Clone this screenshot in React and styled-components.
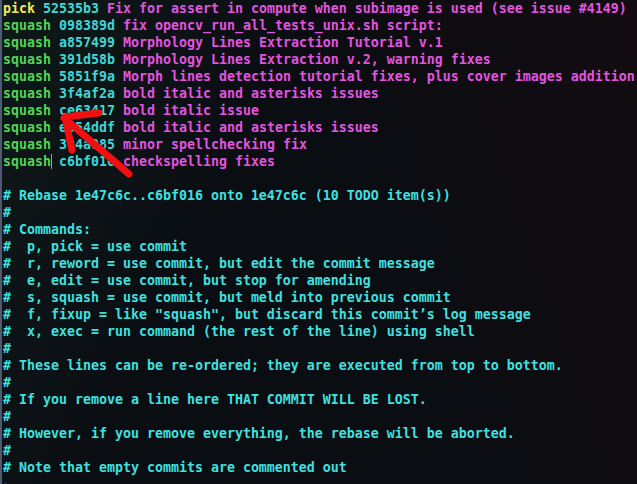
import React from "react";
import styled, { createGlobalStyle } from "styled-components";

const Global = createGlobalStyle`
  html, body {
    margin: 0;
    padding: 0;
    background: #0a0d12;
  }
  body {
    width: 637px;
    height: 484px;
    overflow: hidden;
  }
`;

const Screen = styled.div`
  position: relative;
  width: 637px;
  height: 484px;
  overflow: hidden;
  background:
    linear-gradient(115deg, rgba(20, 40, 34, 0.45) 0%, rgba(20, 40, 34, 0) 38%),
    linear-gradient(250deg, rgba(22, 12, 16, 0.7) 0%, rgba(10, 12, 18, 0) 45%),
    #0a0d12;
  border-left: 2px solid #4d5a70;
  box-sizing: border-box;
`;

const Buffer = styled.pre`
  margin: 0;
  padding: 0 0 0 1px;
  font-family: "DejaVu Sans Mono", "Liberation Mono", monospace;
  font-weight: bold;
  font-size: 13.29px;
  line-height: 17px;
  color: #3fe0e0;
`;

const Line = styled.div`
  height: 17px;
  white-space: pre;
`;

const Cmd = styled.span`
  color: ${(p) => (p.$pick ? "#ecec5a" : "#52d452")};
`;

const Hash = styled.span`
  color: #3fd6d6;
`;

const Msg = styled.span`
  color: #e055e0;
`;

const Cursor = styled.span`
  display: inline-block;
  width: 1px;
  height: 15px;
  margin-right: -1px;
  vertical-align: -3px;
  background: #52d452;
`;

const Tilde = styled.span`
  color: #4a5ed8;
`;

const Arrow = styled.svg`
  position: absolute;
  left: 0;
  top: 0;
  pointer-events: none;
`;

const commits = [
  ["pick", "52535b3", "Fix for assert in compute when subimage is used (see issue #4149)"],
  ["squash", "098389d", "fix opencv_run_all_tests_unix.sh script:"],
  ["squash", "a857499", "Morphology Lines Extraction Tutorial v.1"],
  ["squash", "391d58b", "Morphology Lines Extraction v.2, warning fixes"],
  ["squash", "5851f9a", "Morph lines detection tutorial fixes, plus cover images addition"],
  ["squash", "3f4af2a", "bold italic and asterisks issues"],
  ["squash", "ce63417", "bold italic issue"],
  ["squash", "e054ddf", "bold italic and asterisks issues"],
  ["squash", "394a085", "minor spellchecking fix"],
  ["squash", "c6bf016", "checkspelling fixes"],
];

const comments = [
  "",
  "# Rebase 1e47c6c..c6bf016 onto 1e47c6c (10 TODO item(s))",
  "#",
  "# Commands:",
  "#  p, pick = use commit",
  "#  r, reword = use commit, but edit the commit message",
  "#  e, edit = use commit, but stop for amending",
  "#  s, squash = use commit, but meld into previous commit",
  "#  f, fixup = like \"squash\", but discard this commit\u2019s log message",
  "#  x, exec = run command (the rest of the line) using shell",
  "#",
  "# These lines can be re-ordered; they are executed from top to bottom.",
  "#",
  "# If you remove a line here THAT COMMIT WILL BE LOST.",
  "#",
  "# However, if you remove everything, the rebase will be aborted.",
  "#",
  "# Note that empty commits are commented out",
];

export default function App() {
  return (
    <Screen>
      <Global />
      <Buffer>
        {commits.map(([cmd, hash, msg], i) => (
          <Line key={hash}>
            <Cmd $pick={cmd === "pick"}>{cmd}</Cmd>
            {i === commits.length - 1 && <Cursor />} <Hash>{hash}</Hash> <Msg>{msg}</Msg>
          </Line>
        ))}
        {comments.map((text, i) => (
          <Line key={i}>{text}</Line>
        ))}
        <Line>
          <Tilde>~</Tilde>
        </Line>
      </Buffer>
      <Arrow width="637" height="484" viewBox="0 0 637 484">
        <path
          d="M127 174 L62 118 M63 117 L70 150 M63 117 L97 113"
          stroke="#f01010"
          strokeWidth="7"
          strokeLinecap="round"
          strokeLinejoin="round"
          fill="none"
        />
      </Arrow>
    </Screen>
  );
}
